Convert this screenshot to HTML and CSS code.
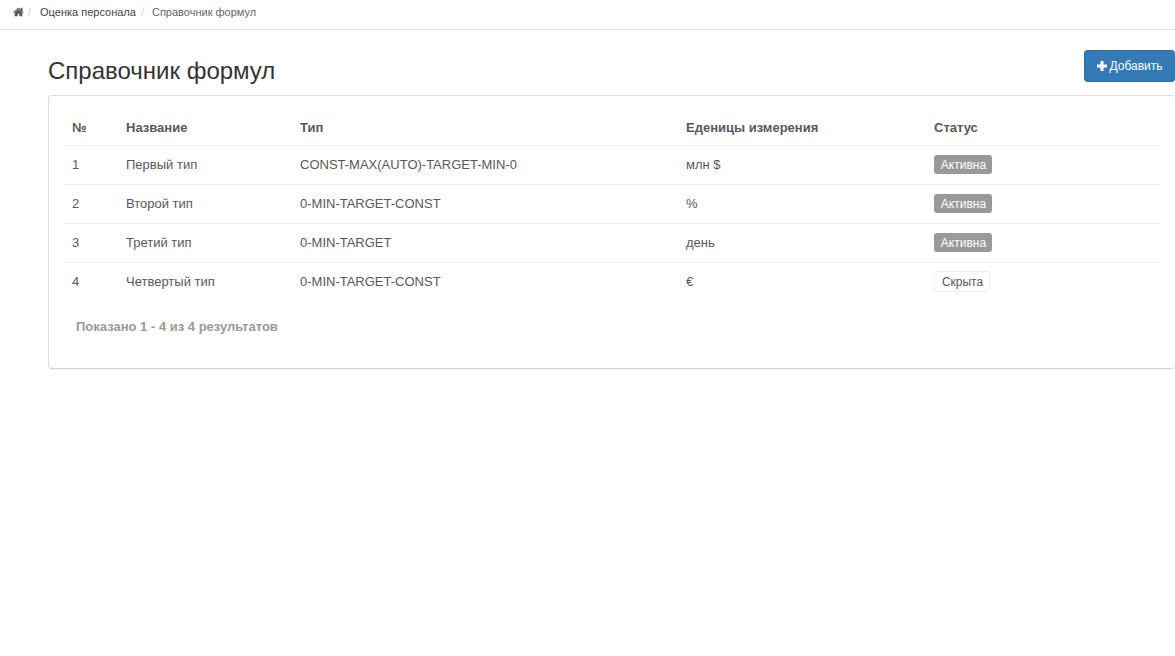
FILE: index.html
```html
<!DOCTYPE html>
<html lang="ru">
<head>
<meta charset="utf-8">
<title>Справочник формул</title>
<link rel="stylesheet" href="styles.css">
</head>
<body>
<nav class="crumbs">
  <a class="crumb-home" href="#" aria-label="Главная"><svg class="home-icon" viewBox="0 0 1664 1792" aria-hidden="true"><path fill="currentColor" d="M1408 992v480q0 26-19 45t-45 19H960v-384H704v384H320q-26 0-45-19t-19-45V992q0-1 .5-3t.5-3l575-474 575 474q1 2 1 6zm223-69-62 74q-8 9-21 11h-3q-13 0-21-7L832 424 140 1001q-12 8-24 7-13-2-21-11l-62-74q-8-10-7-23.500t11-21.500L756 292q32-26 76-26t76 26l272 227V302q0-14 9-23t23-9h192q14 0 23 9t9 23v465l219 182q10 8 11 21.500t-7 23.500z"/></svg></a>
  <span class="sep">/</span>
  <a class="crumb-link" href="#">Оценка персонала</a>
  <span class="sep sep-last">/</span>
  <span class="crumb-current">Справочник формул</span>
</nav>
<main class="page">
  <header class="page-head">
    <h1 class="title">Справочник формул</h1>
    <button class="btn-add" type="button"><svg class="plus-icon" viewBox="0 0 10 10" aria-hidden="true"><path fill="currentColor" d="M3.500 0h3v3.500H10v3H6.500V10h-3V6.500H0v-3h3.500z"/></svg>Добавить</button>
  </header>
  <section class="card">
    <table class="grid">
      <colgroup>
        <col class="c1"><col class="c2"><col class="c3"><col class="c4"><col class="c5">
      </colgroup>
      <thead>
        <tr><th>№</th><th>Название</th><th>Тип</th><th>Еденицы измерения</th><th>Статус</th></tr>
      </thead>
      <tbody>
        <tr><td>1</td><td>Первый тип</td><td>CONST-MAX(AUTO)-TARGET-MIN-0</td><td>млн $</td><td><span class="badge">Активна</span></td></tr>
        <tr><td>2</td><td>Второй тип</td><td>0-MIN-TARGET-CONST</td><td>%</td><td><span class="badge">Активна</span></td></tr>
        <tr><td>3</td><td>Третий тип</td><td>0-MIN-TARGET</td><td>день</td><td><span class="badge">Активна</span></td></tr>
        <tr><td>4</td><td>Четвертый тип</td><td>0-MIN-TARGET-CONST</td><td>€</td><td><span class="badge badge-hidden">Скрыта</span></td></tr>
      </tbody>
    </table>
    <p class="summary">Показано 1 - 4 из 4 результатов</p>
  </section>
</main>
</body>
</html>
```
FILE: styles.css
```css
* { box-sizing: border-box; }
html, body { margin: 0; background: #fff; }
body {
  font-family: "Liberation Sans", Arial, sans-serif;
  font-size: 13px;
  color: #58585c;
  height: 656px;
  overflow: hidden;
}
a { text-decoration: none; color: inherit; }

.crumbs {
  display: flex;
  align-items: center;
  height: 30px;
  padding: 0 0 5px 13px;
  border-bottom: 1px solid #e3e3e3;
  font-size: 11px;
  color: #666;
}
.crumb-home { display: flex; color: #555; }
.home-icon { width: 11px; height: 12px; }
.sep { color: #ccc; margin: 0 9px 0 4px; }
.sep-last { margin: 0 8px 0 5px; }
.crumb-link { color: #444; }
.crumb-current { color: #666; }

.page { padding: 20px 0 0 48px; }
.page-head {
  display: flex;
  justify-content: space-between;
  align-items: flex-start;
  height: 45px;
}
.title {
  margin: 6px 0 0;
  font-size: 24px;
  font-weight: 400;
  line-height: 29px;
  color: #333;
}
.btn-add {
  display: flex;
  align-items: center;
  justify-content: center;
  width: 91px;
  height: 32px;
  margin: 0;
  padding: 0;
  border: 1px solid #2e6da4;
  border-right: 0;
  border-radius: 4px;
  background: #337ab7;
  color: #fff;
  font: 12px "Liberation Sans", Arial, sans-serif;
}
.plus-icon { width: 10px; height: 10px; margin-right: 2px; }

.card {
  height: 274px;
  padding: 12px 15px 0;
  border: 1px solid #ddd;
  border-right: 0;
  border-bottom-color: #d5d5d5;
  border-radius: 4px;
  box-shadow: 0 1px 1px rgba(0, 0, 0, .05);
}
.grid {
  width: 1096px;
  border-collapse: collapse;
  table-layout: fixed;
}
.c1 { width: 54px; }
.c2 { width: 174px; }
.c3 { width: 386px; }
.c4 { width: 248px; }
.c5 { width: 234px; }
th, td {
  padding: 0 8px;
  text-align: left;
  vertical-align: middle;
}
th {
  height: 37px;
  padding-top: 3px;
  font-weight: 700;
  color: #58585c;
}
td {
  height: 39px;
  border-top: 1px solid #eee;
}
.badge {
  display: inline-block;
  width: 58px;
  height: 19px;
  padding: 1px 0 0 1px;
  line-height: 18px;
  text-align: center;
  border-radius: 3px;
  background: #999;
  color: #fff;
  font-size: 12px;
  vertical-align: middle;
}
.badge-hidden {
  width: 56px;
  height: 21px;
  line-height: 19px;
  background: #fff;
  color: #58585c;
  border: 1px solid #eee;
}
.summary {
  margin: 18px 0 0 12px;
  font-weight: 700;
  line-height: 16px;
  color: #999;
}
```
